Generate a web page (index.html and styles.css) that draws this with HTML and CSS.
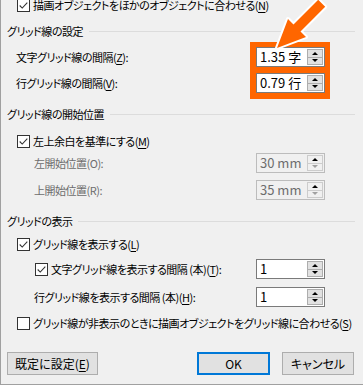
FILE: index.html
```html
<!DOCTYPE html>
<html lang="ja">

<head>
    <meta charset="UTF-8">
    <meta name="viewport" content="width=device-width, initial-scale=1.0">
    <title>グリッド線</title>
    <link rel="stylesheet" href="styles.css">
</head>

<body>
    <div class="dialog">
        <div class="highlight"></div>

        <div class="row check-row top-row">
            <span class="check checked"><svg viewBox="0 0 13 13"><polyline points="2,6.5 5,9.5 11,3" /></svg></span>
            <span>描画オブジェクトをほかのオブジェクトに合わせる(<u>N</u>)</span>
        </div>

        <div class="group-title gt-1"><span>グリッド線の設定</span></div>
        <div class="row field-row r-z">
            <span>文字グリッド線の間隔(<u>Z</u>):</span>
            <div class="num-input marked">
                <span class="num-value">1.35 字</span>
                <div class="spin"><span class="spin-btn up"></span><span class="spin-btn down"></span></div>
            </div>
        </div>
        <div class="row field-row r-v">
            <span>行グリッド線の間隔(<u>V</u>):</span>
            <div class="num-input marked">
                <span class="num-value">0.79 行</span>
                <div class="spin"><span class="spin-btn up"></span><span class="spin-btn down"></span></div>
            </div>
        </div>

        <div class="group-title gt-2"><span>グリッド線の開始位置</span></div>
        <div class="row check-row r-m">
            <span class="check checked"><svg viewBox="0 0 13 13"><polyline points="2,6.5 5,9.5 11,3" /></svg></span>
            <span>左上余白を基準にする(<u>M</u>)</span>
        </div>
        <div class="row field-row sub disabled r-o">
            <span>左開始位置(O):</span>
            <div class="num-input">
                <span class="num-value">30 mm</span>
                <div class="spin"><span class="spin-btn up"></span><span class="spin-btn down"></span></div>
            </div>
        </div>
        <div class="row field-row sub disabled r-r">
            <span>上開始位置(R):</span>
            <div class="num-input">
                <span class="num-value">35 mm</span>
                <div class="spin"><span class="spin-btn up"></span><span class="spin-btn down"></span></div>
            </div>
        </div>

        <div class="group-title gt-3"><span>グリッドの表示</span></div>
        <div class="row check-row r-l">
            <span class="check checked"><svg viewBox="0 0 13 13"><polyline points="2,6.5 5,9.5 11,3" /></svg></span>
            <span>グリッド線を表示する(<u>L</u>)</span>
        </div>
        <div class="row field-row sub-check r-t">
            <span class="label-check">
                <span class="check checked"><svg viewBox="0 0 13 13"><polyline points="2,6.5 5,9.5 11,3" /></svg></span>
                <span>文字グリッド線を表示する間隔 (本)(<u>T</u>):</span>
            </span>
            <div class="num-input">
                <span class="num-value">1</span>
                <div class="spin"><span class="spin-btn up"></span><span class="spin-btn down"></span></div>
            </div>
        </div>
        <div class="row field-row sub r-h">
            <span>行グリッド線を表示する間隔 (本)(<u>H</u>):</span>
            <div class="num-input">
                <span class="num-value">1</span>
                <div class="spin"><span class="spin-btn up"></span><span class="spin-btn down"></span></div>
            </div>
        </div>
        <div class="row check-row r-s">
            <span class="check"></span>
            <span>グリッド線が非表示のときに描画オブジェクトをグリッド線に合わせる(<u>S</u>)</span>
        </div>

        <div class="buttons">
            <div class="btn btn-default">既定に設定(<u>E</u>)</div>
            <div class="btn btn-ok">OK</div>
            <div class="btn btn-cancel">キャンセル</div>
        </div>

        <svg class="arrow" viewBox="0 0 363 110">
            <polygon points="277,48 288,19 293.5,24.5 318.2,-0.2 325.2,6.8 300.5,31.5 306,37" />
        </svg>
    </div>
</body>

</html>
```

FILE: styles.css
```css
body {
    margin: 0;
    background-color: #f0f0f0;
}

.dialog {
    position: relative;
    width: 363px;
    height: 385px;
    box-sizing: border-box;
    padding: 0 8px 0 6px;
    border-left: 1px solid #a0a0a0;
    border-bottom: 1px solid #a0a0a0;
    background-color: #f0f0f0;
    overflow: hidden;
    font-family: "Noto Sans CJK JP", "Noto Sans", sans-serif;
    font-size: 11px;
    letter-spacing: -0.5px;
    font-feature-settings: "palt";
    color: #000;
}

u {
    text-decoration-thickness: 1px;
    text-underline-offset: 2px;
}

.row {
    display: flex;
    align-items: center;
    height: 20px;
    white-space: nowrap;
}

.check-row {
    padding-left: 10px;
    height: 18px;
}

.field-row {
    justify-content: space-between;
    padding-left: 9px;
    padding-right: 30px;
}

.field-row.sub {
    padding-left: 27px;
}

.field-row.sub-check {
    padding-left: 28px;
}

.label-check {
    display: flex;
    align-items: center;
}

.disabled {
    color: #6d6d6d;
}

/* vertical rhythm of the dialog */
.top-row { margin-top: -4px; }
.gt-1 { margin-top: 8px; }
.r-z { margin-top: 7px; }
.r-v { margin-top: 6px; }
.gt-2 { margin-top: 12px; }
.r-m { margin-top: 9px; }
.r-o { margin-top: 3px; }
.r-r { margin-top: 7px; }
.gt-3 { margin-top: 12px; }
.r-l { margin-top: 5px; }
.r-t { margin-top: 6px; }
.r-h { margin-top: 8px; }
.r-s { margin-top: 7px; }

.group-title {
    display: flex;
    align-items: center;
    height: 18px;
    white-space: nowrap;
}

.group-title::after {
    content: "";
    flex: 1;
    height: 1px;
    margin-left: 6px;
    background-color: #dcdcdc;
}

.check {
    display: inline-block;
    width: 13px;
    height: 13px;
    box-sizing: border-box;
    border: 1px solid #333;
    background-color: #fff;
    margin-right: 3px;
    flex: none;
}

.check svg {
    display: block;
    width: 11px;
    height: 11px;
}

.check polyline {
    fill: none;
    stroke: #333;
    stroke-width: 1.3;
}

.num-input {
    position: relative;
    display: flex;
    width: 69px;
    height: 20px;
    box-sizing: border-box;
    border: 1px solid #7a7a7a;
    background-color: #fff;
    padding: 1px;
    color: #000;
}

.num-value {
    flex: 1;
    padding-left: 2px;
    font-size: 13px;
    line-height: 16px;
    letter-spacing: 0;
    font-feature-settings: normal;
}

.disabled .num-input {
    border-color: #bcbcbc;
    background-color: #f0f0f0;
    color: #6d6d6d;
}

.spin {
    display: flex;
    flex-direction: column;
    width: 16px;
}

.spin-btn {
    flex: 1;
    display: flex;
    align-items: center;
    justify-content: center;
    box-sizing: border-box;
    border: 1px solid #adadad;
    background-color: #e1e1e1;
}

.spin-btn.down {
    border-top: none;
}

.spin-btn::before {
    content: "";
    border-left: 3px solid transparent;
    border-right: 3px solid transparent;
}

.spin-btn.up::before {
    border-bottom: 3px solid #000;
}

.spin-btn.down::before {
    border-top: 3px solid #000;
}

.disabled .spin-btn {
    border-color: #ccc;
    background-color: #f0f0f0;
}

.disabled .spin-btn.down::before {
    border-top-color: #a0a0a0;
}

.buttons {
    display: flex;
    gap: 12px;
    margin-top: 20px;
    padding-right: 1px;
    font-size: 12px;
    letter-spacing: 0;
}

.btn {
    height: 23px;
    box-sizing: border-box;
    border: 1px solid #adadad;
    background-color: #e1e1e1;
    display: flex;
    align-items: center;
    justify-content: center;
    white-space: nowrap;
}

.btn-default {
    width: 91px;
    margin-right: auto;
}

.btn-ok {
    width: 73px;
    border: 2px solid #0078d7;
}

.btn-cancel {
    width: 72px;
}

.highlight {
    position: absolute;
    left: 249px;
    top: 42px;
    width: 80px;
    height: 57px;
    background-color: #ff6600;
}

.arrow {
    position: absolute;
    left: -1px;
    top: 0;
    width: 363px;
    height: 110px;
    pointer-events: none;
}

.arrow polygon {
    fill: #ff6600;
    stroke: #fff;
    stroke-width: 4;
    stroke-linejoin: round;
    paint-order: stroke;
}
```
